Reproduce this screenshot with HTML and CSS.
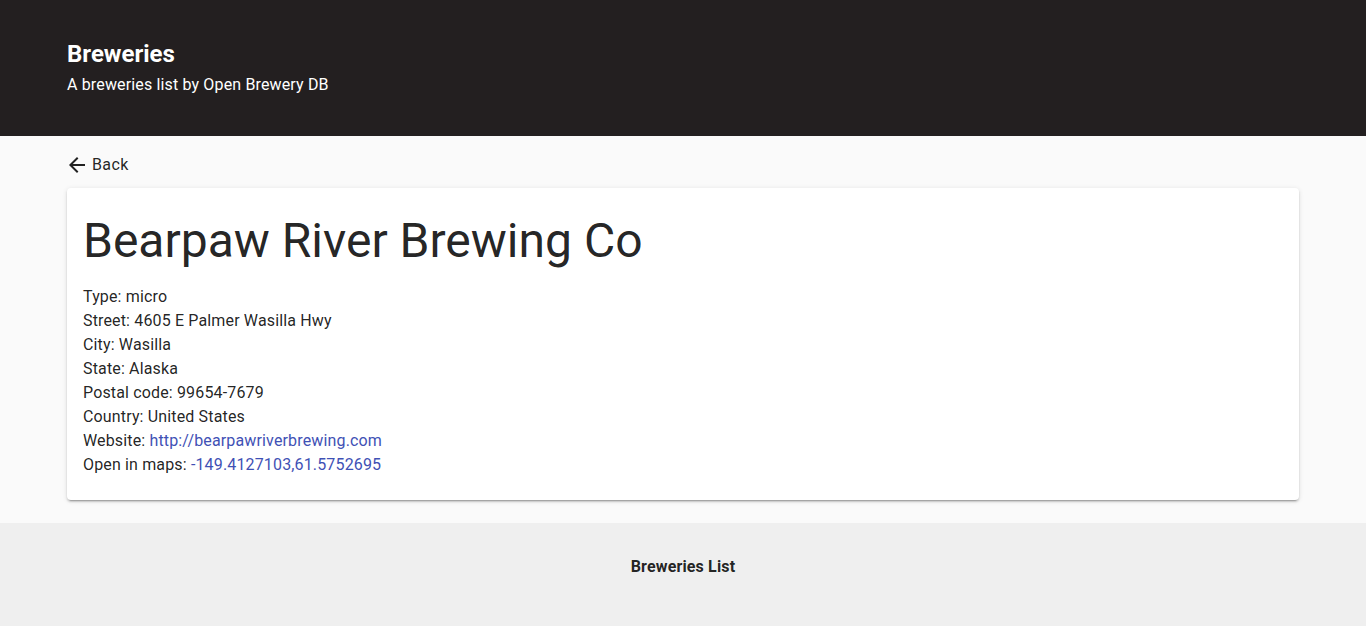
FILE: index.html
```html
<!DOCTYPE html>
<html lang="en">
<head>
<meta charset="utf-8">
<title>Breweries</title>
<link rel="stylesheet" href="styles.css">
</head>
<body>
<header class="app-header">
  <div class="container">
    <h1 class="app-title">Breweries</h1>
    <p class="app-subtitle">A breweries list by Open Brewery DB</p>
  </div>
</header>
<main class="main">
  <div class="container">
    <a class="back-btn" href="#">
      <svg class="back-icon" viewBox="0 0 24 24" width="24" height="24" aria-hidden="true"><path d="M20 11H7.83l5.59-5.59L12 4l-8 8 8 8 1.41-1.41L7.83 13H20v-2z"/></svg>
      <span>Back</span>
    </a>
    <section class="card">
      <h2 class="card-title">Bearpaw River Brewing Co</h2>
      <div class="info">
        <div>Type: micro</div>
        <div>Street: 4605 E Palmer Wasilla Hwy</div>
        <div>City: Wasilla</div>
        <div>State: Alaska</div>
        <div>Postal code: 99654-7679</div>
        <div>Country: United States</div>
        <div>Website: <a class="link" href="#">http://bearpawriverbrewing.com</a></div>
        <div>Open in maps: <a class="link" href="#">-149.4127103,61.5752695</a></div>
      </div>
    </section>
  </div>
</main>
<footer class="footer">
  <div class="footer-title">Breweries List</div>
</footer>
</body>
</html>
```

FILE: styles.css
```css
* { box-sizing: border-box; }
html, body { margin: 0; padding: 0; }
body {
  font-family: Roboto, "Liberation Sans", Arial, sans-serif;
  color: rgba(0, 0, 0, 0.87);
  background: #efefef;
  font-size: 16px;
  line-height: 24px;
  letter-spacing: 0.15px;
}
.container {
  max-width: 1280px;
  margin: 0 auto;
  padding: 0 24px;
}
.app-header {
  background: #231f20;
  color: #fff;
  padding: 41px 0 39px;
}
.app-title {
  margin: 0;
  font-size: 24px;
  font-weight: 700;
  line-height: 26px;
  letter-spacing: 0;
}
.app-subtitle {
  margin: 6px 0 0;
  font-size: 16px;
  line-height: 24px;
}
.main {
  background: #fafafa;
  padding: 13px 0 23px;
}
.back-btn {
  display: flex;
  width: fit-content;
  align-items: center;
  gap: 3px;
  height: 32px;
  margin-left: -2px;
  color: rgba(0, 0, 0, 0.87);
  text-decoration: none;
  font-size: 16px;
  letter-spacing: 0.4px;
}
.back-icon { fill: rgba(0, 0, 0, 0.87); display: block; flex: none; }
.card {
  margin-top: 7px;
  background: #fff;
  border-radius: 4px;
  padding: 25px 16px 23px;
  box-shadow: 0 3px 1px -2px rgba(0,0,0,.2), 0 2px 2px 0 rgba(0,0,0,.14), 0 1px 5px 0 rgba(0,0,0,.12);
}
.card-title {
  margin: 0 0 16px;
  font-size: 48px;
  font-weight: 400;
  line-height: 56px;
  letter-spacing: 0;
}
.info { font-size: 16px; line-height: 24px; }
.link { color: #3f51b5; text-decoration: none; }
.footer {
  background: #efefef;
  padding: 32px 0 47px;
  text-align: center;
}
.footer-title {
  font-weight: 700;
  font-size: 16px;
  line-height: 24px;
}
```
